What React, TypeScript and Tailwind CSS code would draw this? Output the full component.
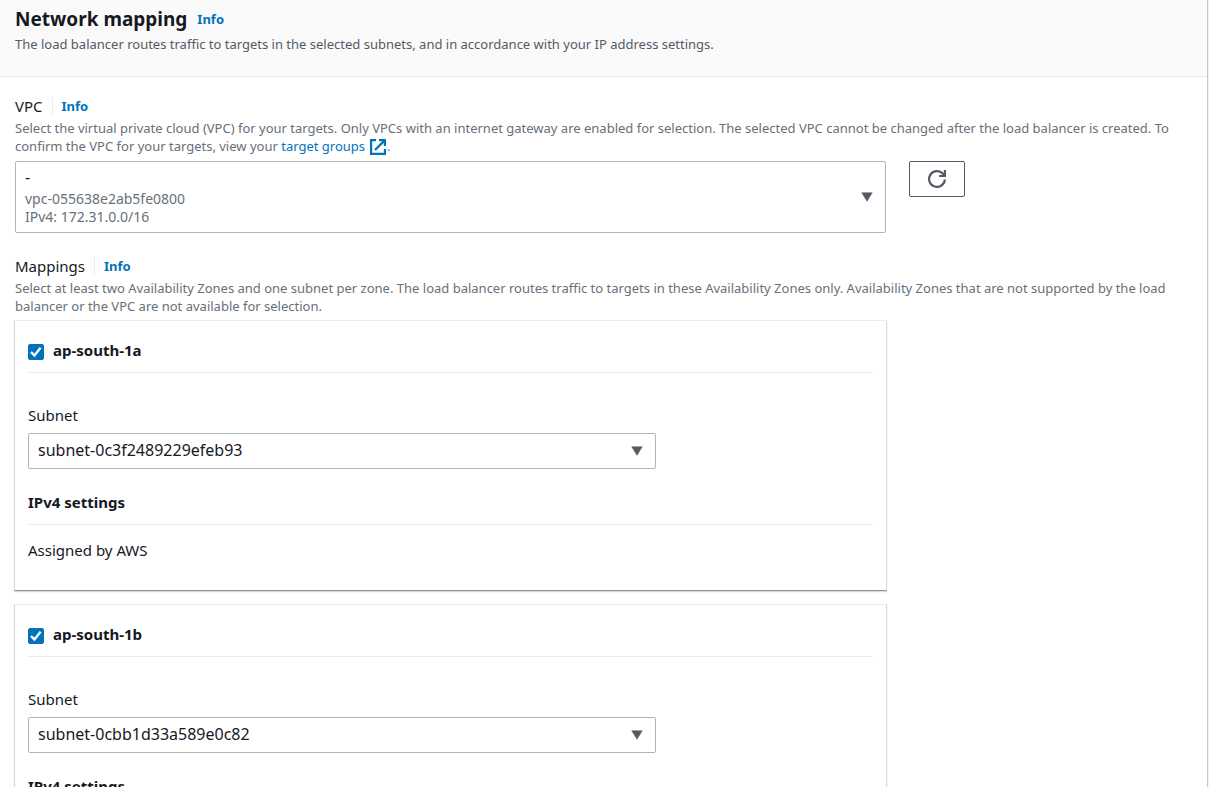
import { useState } from 'react'
import type { ReactNode } from 'react'

interface Zone {
  name:    string
  subnets: string[]
}

const ZONES: Zone[] = [
  { name: 'ap-south-1a', subnets: ['subnet-0c3f2489229efeb93'] },
  { name: 'ap-south-1b', subnets: ['subnet-0cbb1d33a589e0c82'] },
]

function Caret({ className }: { className?: string }) {
  return (
    <svg viewBox="0 0 12 10" className={`w-3 h-[10px] pointer-events-none ${className ?? ''}`} fill="#545b64" aria-hidden="true">
      <path d="M.8.8h10.4L6 9.2z" stroke="#545b64" strokeWidth=".6" strokeLinejoin="round" />
    </svg>
  )
}

function ExternalIcon() {
  return (
    <svg viewBox="0 0 16 16" className="inline-block size-4 ml-[5px] mr-px align-[-4px]" fill="none" stroke="#0073bb" strokeWidth="2.2" aria-hidden="true">
      <path d="M6 1.1H1.1v13.8h13.8V10" />
      <path d="M9 1.1h5.9V7M14.9 1.1 5 11" />
    </svg>
  )
}

function RefreshIcon() {
  return (
    <svg viewBox="0 0 18 18" className="size-[18px]" fill="none" stroke="#545b64" strokeWidth="2.2" aria-hidden="true">
      <path d="M16.9 9.5A7.9 7.9 0 1 1 14.6 3.4L16 5" />
      <path d="M16.9 0v6H11" />
      <path d="M17 2.5V6h-3.5z" fill="#545b64" stroke="none" />
    </svg>
  )
}

function InfoLink() {
  return <a href="#info" className="pt-[2px] text-[13px] font-bold text-[#0073bb]">Info</a>
}

function FieldHeader({ title, children }: { title: string; children: ReactNode }) {
  return (
    <>
      <div className="flex items-center h-[22px]">
        <h3 className="text-[15px] pr-[9px]">{title}</h3>
        <span className="h-[18px] border-l border-[#eaeded] pr-[9px]" />
        <InfoLink />
      </div>
      <p className="mt-[2px] text-[13px] leading-[18px] text-[#687078]">{children}</p>
    </>
  )
}

function ZoneCard({ zone }: { zone: Zone }) {
  const [checked, setChecked] = useState(true)
  const [subnet,  setSubnet]  = useState(zone.subnets[0])

  return (
    <section className="border border-t-[#eaeded] border-x-[#d5dbdb] border-b-[#879596] px-[13px] pt-[19px] pb-[29px] shadow-[0_1px_1px_0_rgba(0,28,36,0.15)]">
      <label className="flex items-center gap-[9px] pb-[11px] border-b border-[#eaeded] text-[15px] leading-[21px] font-bold">
        <span className="grid size-4 mt-[2px]">
          <input
            type="checkbox"
            checked={checked}
            onChange={e => setChecked(e.target.checked)}
            className="col-start-1 row-start-1 appearance-none size-4 rounded-[2px] border border-[#687078] checked:border-[#0073bb] checked:bg-[#0073bb]"
          />
          {checked && (
            <svg viewBox="0 0 16 16" className="col-start-1 row-start-1 size-4 pointer-events-none" fill="none" stroke="#fff" strokeWidth="2.4" aria-hidden="true">
              <path d="M3 8 6.4 11.4 12.6 3.8" />
            </svg>
          )}
        </span>
        {zone.name}
      </label>

      <div className="grid grid-cols-4 gap-x-[23px] mt-[31px]">
        <div className="col-span-3">
          <label htmlFor={zone.name} className="block text-[15px] leading-[22px]">Subnet</label>
          <div className="relative mt-[7px]">
            <select
              id={zone.name}
              value={subnet}
              onChange={e => setSubnet(e.target.value)}
              className="block w-full h-9 appearance-none rounded-[2px] border border-[#aab7b8] bg-white px-[9px] pb-[3px] text-[16px]"
            >
              {zone.subnets.map(id => <option key={id}>{id}</option>)}
            </select>
            <Caret className="absolute right-[13px] top-[13px]" />
          </div>
        </div>
      </div>

      <h4 className="mt-[22px] pb-[11px] border-b border-[#eaeded] text-[15px] leading-[22px] font-bold">IPv4 settings</h4>
      <p className="mt-[15px] text-[15px] leading-[21px]">Assigned by AWS</p>
    </section>
  )
}

export default function App() {
  return (
    <div className="h-screen overflow-hidden bg-[#f2f3f3] pr-px font-['Noto_Sans',sans-serif] text-[#16191f]">
      <main className="min-h-full border-r border-[#c3c8c8] bg-white">
        <header className="border-b border-[#eaeded] bg-[#fafafa] px-[15px] pt-[6px] pb-[23px]">
          <div className="flex items-center gap-[10px] h-[26px]">
            <h2 className="text-[19px] font-bold">Network mapping</h2>
            <InfoLink />
          </div>
          <p className="mt-[3px] text-[13px] leading-[18px] text-[#545b64]">
            The load balancer routes traffic to targets in the selected subnets, and in accordance with your IP address settings.
          </p>
        </header>

        <div className="pl-[15px] pr-[23px] pt-[18px]">
          <FieldHeader title="VPC">
            Select the virtual private cloud (VPC) for your targets. Only VPCs with an internet gateway are enabled for selection. The selected VPC cannot be changed after the load balancer is created. To confirm the VPC for your targets, view your{' '}
            <a href="#target-groups" className="text-[#0073bb]">target groups<ExternalIcon /></a>.
          </FieldHeader>

          <div className="grid grid-cols-4 items-start gap-x-[23px] mt-[6px]">
            <button
              type="button"
              aria-haspopup="listbox"
              className="col-span-3 flex h-[72px] items-center justify-between rounded-[2px] border border-[#aab7b8] pl-[9px] pr-3 text-left"
            >
              <span className="block text-[14px] leading-[18px] text-[#687078]">
                <span className="block h-[22px] text-[16px] text-[#16191f]">-</span>
                <span className="block">vpc-055638e2ab5fe0800</span>
                <span className="block">IPv4: 172.31.0.0/16</span>
              </span>
              <Caret />
            </button>
            <button
              type="button"
              aria-label="Refresh VPCs"
              className="flex h-9 w-14 items-center justify-center rounded-[2px] border border-[#545b64]"
            >
              <RefreshIcon />
            </button>
          </div>

          <div className="mt-[22px]">
            <FieldHeader title="Mappings">
              Select at least two Availability Zones and one subnet per zone. The load balancer routes traffic to targets in these Availability Zones only. Availability Zones that are not supported by the load balancer or the VPC are not available for selection.
            </FieldHeader>
          </div>

          <div className="grid grid-cols-4 gap-x-[23px] mt-[5px]">
            <div className="col-span-3 -mx-px flex flex-col gap-[13px]">
              {ZONES.map(zone => <ZoneCard key={zone.name} zone={zone} />)}
            </div>
          </div>
        </div>
      </main>
    </div>
  )
}
